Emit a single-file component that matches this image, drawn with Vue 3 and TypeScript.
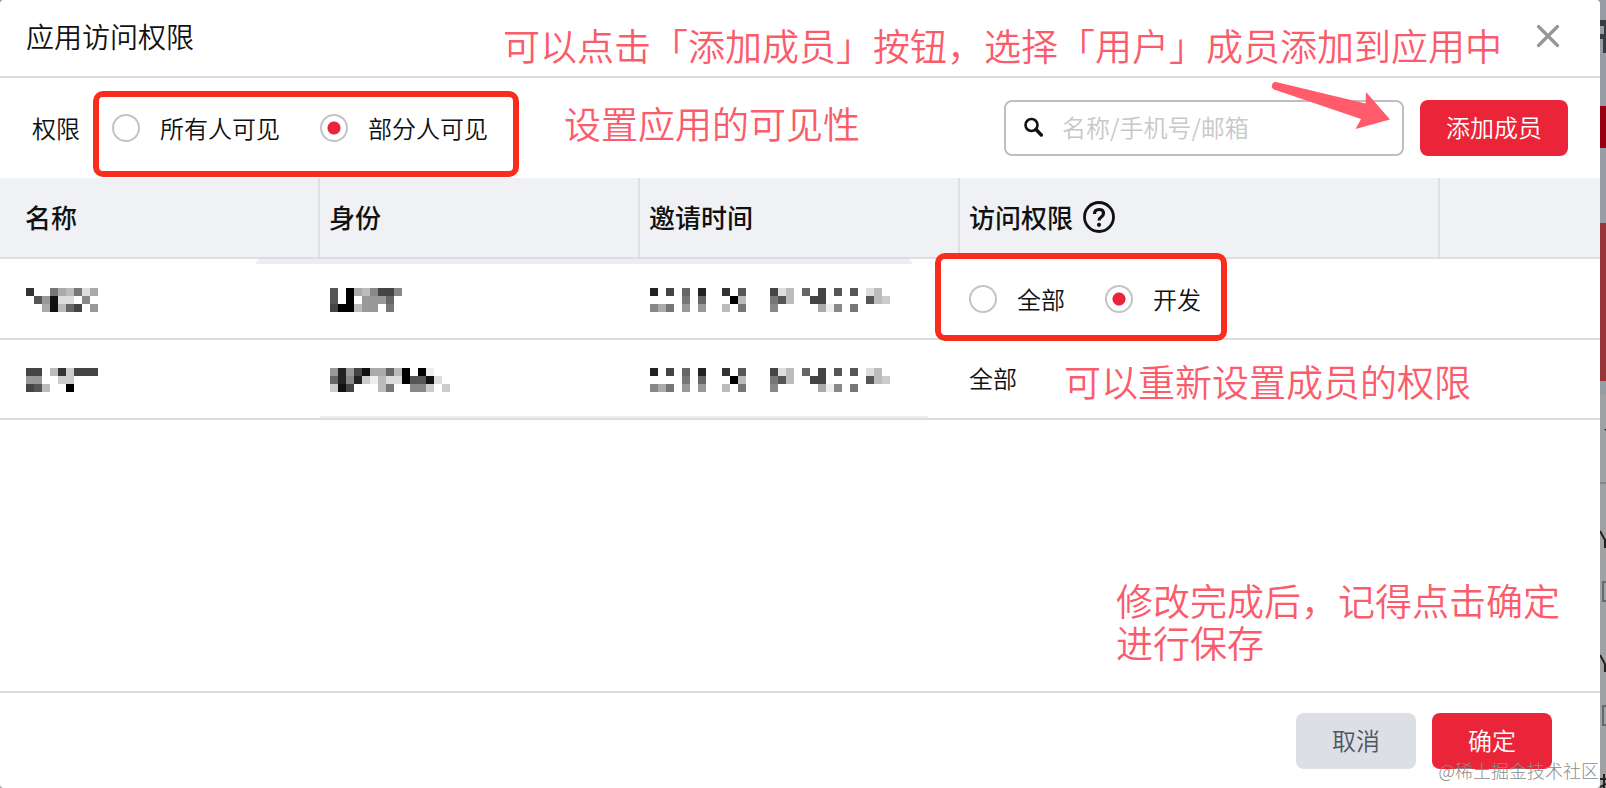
<script setup lang="ts">
import { ref } from 'vue'

interface Member {
  id: number
  name: string[]
  role: string[]
  invited: string[]
  editing: boolean
}

const visibility = ref<'all' | 'part'>('part')
const access = ref<'all' | 'dev'>('dev')
const keyword = ref('')

const invitedMask = [
  '2.4.6.2..3.5...4db.6.4.5.5.db.',
  '....7.6...0b...75b..44.....5bc',
  '8a7.9.9..b.7...8.....ae8.7....',
]

// Masked values: one hex grey level per 8px block, a dot leaves the block empty.
const members: Member[] = [
  {
    id: 1,
    name: ['3..7ab7da', '.591ddf8.', '..a1b64.9'],
    role: ['5.0ab8448', '5.0.9996.', '400b99.7.'],
    invited: invitedMask,
    editing: true,
  },
  {
    id: 2,
    name: ['44.b3c444', '99..cc...', '45b.f0...'],
    role: ['92941aa6b0.0e..', '6282cebdd0551d.', 'c14...b7..88cfc'],
    invited: invitedMask,
    editing: false,
  },
]

function blocks(mask: string[]) {
  return mask.flatMap((line, y) =>
    [...line].flatMap((c, x) => (c === '.' ? [] : [{ x: x * 8, y: y * 8, fill: `#${c}${c}${c}` }])),
  )
}
</script>

<template>
  <div class="page">
    <main class="dialog" role="dialog" aria-labelledby="dialog-title">
      <header class="head">
        <h1 id="dialog-title">应用访问权限</h1>
        <button class="close" type="button" aria-label="关闭">
          <svg width="24" height="24" viewBox="0 0 24 24">
            <path d="M2.500 2.500 21.500 21.500M21.500 2.500 2.500 21.500" fill="none" stroke="#969696" stroke-width="3.200" stroke-linecap="round" />
          </svg>
        </button>
        <p class="note note-add">可以点击「添加成员」按钮，选择「用户」成员添加到应用中</p>
      </header>

      <section class="toolbar">
        <span id="visibility-label">权限</span>
        <div class="radios framed" role="radiogroup" aria-labelledby="visibility-label">
          <label><input v-model="visibility" type="radio" name="visibility" value="all" />所有人可见</label>
          <label><input v-model="visibility" type="radio" name="visibility" value="part" />部分人可见</label>
        </div>
        <p class="note note-visible">设置应用的可见性</p>
        <div class="search">
          <svg width="20" height="20" viewBox="0 0 20 20">
            <circle cx="7.500" cy="8" r="6" fill="none" stroke="#111" stroke-width="2.600" />
            <path d="M12 12.500 17.300 18" fill="none" stroke="#111" stroke-width="3.400" stroke-linecap="round" />
          </svg>
          <input v-model="keyword" type="search" placeholder="名称/手机号/邮箱" aria-label="名称/手机号/邮箱" />
        </div>
        <button class="btn primary add" type="button">添加成员</button>
        <svg class="arrow" width="120" height="50" viewBox="0 0 120 50">
          <path d="M6 2 95.500 23.500 96 12 120 39.500 85.500 49 91 39 4 9.500Q0 7 3 3Q4 1.500 6 2Z" fill="#ff5b6b" />
        </svg>
      </section>

      <div class="list">
        <table>
          <colgroup>
            <col class="c20" /><col class="c20" /><col class="c20" /><col class="c30" /><col class="c10" />
          </colgroup>
          <thead>
            <tr>
              <th scope="col">名称</th>
              <th scope="col">身份</th>
              <th scope="col">邀请时间</th>
              <th scope="col">
                <span class="access-head">
                  访问权限
                  <svg width="32" height="32" viewBox="0 0 32 32">
                    <circle cx="16" cy="16" r="14.500" fill="none" stroke="#111" stroke-width="2.800" />
                    <path d="M11.500 13Q11.500 8.500 16 8.500Q20.500 8.500 20.500 12.300Q20.500 14.500 18.300 16Q16 17.500 16 19.500" fill="none" stroke="#111" stroke-width="3.200" />
                    <circle cx="16" cy="23.800" r="2.100" fill="#111" />
                  </svg>
                </span>
              </th>
              <th></th>
            </tr>
          </thead>
          <tbody>
            <tr v-for="m in members" :key="m.id">
              <td v-for="(mask, i) in [m.name, m.role, m.invited]" :key="i">
                <svg class="mask" :width="mask[0].length * 8" height="24" shape-rendering="crispEdges" aria-hidden="true">
                  <rect v-for="b in blocks(mask)" :key="`${b.x}-${b.y}`" :x="b.x" :y="b.y" width="8" height="8" :fill="b.fill" />
                </svg>
              </td>
              <td>
                <div v-if="m.editing" class="radios framed" role="radiogroup" aria-label="访问权限">
                  <label><input v-model="access" type="radio" name="access" value="all" />全部</label>
                  <label><input v-model="access" type="radio" name="access" value="dev" />开发</label>
                </div>
                <div v-else class="plain">
                  全部
                  <p class="note note-access">可以重新设置成员的权限</p>
                </div>
              </td>
              <td></td>
            </tr>
          </tbody>
        </table>
        <div class="band band-top"></div>
        <div class="band band-bottom"></div>
      </div>

      <section class="rest">
        <p class="note note-save">修改完成后，记得点击确定<br />进行保存</p>
      </section>

      <footer class="foot">
        <button class="btn cancel" type="button">取消</button>
        <button class="btn primary" type="button">确定</button>
        <span class="watermark">@稀土掘金技术社区</span>
      </footer>
    </main>

    <svg class="behind" width="6" height="788" viewBox="0 0 6 788" aria-hidden="true">
      <rect width="6" height="788" fill="#a0a1a3" />
      <rect width="6" height="395" fill="#969da5" />
      <path d="M0 20H6V53H3V39H0V34H4V26H0Z" fill="#363c42" />
      <rect y="106" width="6" height="42" fill="#980012" />
      <rect y="223" width="6" height="158" fill="#963439" />
      <rect y="482" width="6" height="2" fill="#858688" />
      <path d="M4 429H6V431Z" fill="#222" />
      <path d="M0 531 5 540V548M0 655 5 664V672" fill="none" stroke="#222" stroke-width="2" />
      <path d="M6 582H3V601H6M6 706H3V725H6" fill="none" stroke="#66696d" stroke-width="2" />
      <path d="M4 774V788M0 779H6M0 787 6 784" fill="none" stroke="#222" stroke-width="2" />
    </svg>
  </div>
</template>

<style>
body {
  margin: 0;
  background: #a0a1a3;
}
</style>

<style scoped>
.page {
  display: flex;
  min-height: 100vh;
  overflow: hidden;
  font-family: "Noto Sans CJK SC", sans-serif;
  font-size: 24px;
  font-weight: 350;
  line-height: 36px;
  color: #111;
}
.dialog {
  flex: 1;
  min-width: 0;
  display: flex;
  flex-direction: column;
  background: #fff;
  border-radius: 4px;
}
.behind {
  flex: none;
}
.head {
  position: relative;
  display: flex;
  align-items: center;
  justify-content: space-between;
  height: 78px;
  box-sizing: border-box;
  padding: 0 40px 5px 26px;
  border-bottom: 2px solid #d9dbdd;
}
h1 {
  margin: 0;
  font-size: 28px;
  font-weight: inherit;
}
.close {
  display: flex;
  padding: 0;
  border: 0;
  background: none;
}
.note {
  position: absolute;
  margin: 0;
  font-size: 37px;
  font-weight: 350;
  line-height: 42px;
  color: #fb5c6b;
  white-space: nowrap;
}
.note-add {
  right: 98px;
  top: 24px;
}
.toolbar {
  position: relative;
  display: flex;
  align-items: center;
  height: 100px;
  box-sizing: border-box;
  padding: 0 32px;
}
.radios {
  position: relative;
  display: inline-flex;
  gap: 40px;
}
.toolbar .radios {
  margin-left: 32px;
}
.radios label {
  display: flex;
  align-items: center;
  gap: 20px;
}
.radios input {
  appearance: none;
  box-sizing: border-box;
  width: 28px;
  height: 28px;
  margin: 0;
  border: 2px solid #c4c4c6;
  border-radius: 50%;
  background: #fff;
}
.radios input:checked {
  background: radial-gradient(circle, #e9243b 6px, #fff 7px);
}
.framed::after {
  content: "";
  position: absolute;
  inset: -19px -31px -31px -19px;
  border: 6px solid #fa2c1e;
  border-radius: 10px;
  pointer-events: none;
}
td .framed::after {
  inset: -28px -26px -24px -34px;
}
.note-visible {
  left: 564px;
  top: 24px;
}
.search {
  display: flex;
  align-items: center;
  gap: 18px;
  box-sizing: border-box;
  width: 400px;
  height: 56px;
  margin-left: auto;
  padding: 0 18px 2px;
  border: 2px solid #bebebe;
  border-radius: 8px;
}
.search svg {
  flex: none;
}
.search input {
  flex: 1;
  min-width: 0;
  padding: 0;
  border: 0;
  outline: 0;
  background: none;
  font: inherit;
  color: inherit;
}
.search input::placeholder {
  color: #c8c8c8;
  opacity: 1;
}
.btn {
  width: 120px;
  height: 56px;
  padding: 0 0 2px;
  border: 0;
  border-radius: 8px;
  font: inherit;
}
.primary {
  background: #eb2539;
  color: #fff;
}
.cancel {
  background: #dce0e6;
  color: #50555f;
}
.add {
  width: 148px;
  margin-left: 16px;
}
.arrow {
  position: absolute;
  right: 210px;
  top: 2px;
}
.list {
  position: relative;
}
table {
  width: 100%;
  table-layout: fixed;
  border-collapse: separate;
  border-spacing: 0;
}
.c20 {
  width: 20%;
}
.c30 {
  width: 30%;
}
.c10 {
  width: 10%;
}
th,
td {
  box-sizing: border-box;
  height: 80px;
  padding: 0 10px 2px;
  border-bottom: 2px solid #dcdee1;
  text-align: left;
}
th {
  height: 81px;
  padding-left: 9px;
  border-right: 2px solid #dcdfe3;
  background: #eff1f5;
  font-size: 26px;
  font-weight: 500;
}
tbody tr:first-child td {
  height: 81px;
}
th:last-child {
  border-right: 0;
}
th:first-child {
  padding-left: 25px;
}
td:first-child {
  padding-left: 26px;
}
td:nth-child(4) {
  padding-left: 9px;
}
.access-head {
  display: flex;
  align-items: center;
  gap: 10px;
}
.mask {
  display: block;
  margin-top: 4px;
}
td .radios {
  display: inline-flex;
  vertical-align: middle;
}
.plain {
  position: relative;
}
.note-access {
  left: 95px;
  top: 0;
}
.band {
  position: absolute;
  background: #eceef2;
}
.band-top {
  left: 16%;
  right: 43%;
  top: 81px;
  height: 5px;
  border-radius: 12px 12px 0 0;
}
.band-bottom {
  left: 20%;
  right: 42%;
  bottom: 2px;
  height: 2px;
}
.rest {
  position: relative;
  flex: 1;
}
.note-save {
  right: 40px;
  bottom: 28px;
}
.foot {
  position: relative;
  display: flex;
  justify-content: flex-end;
  gap: 16px;
  padding: 20px 48px 19px;
  border-top: 2px solid #d9dbdd;
}
.watermark {
  position: absolute;
  right: 1px;
  bottom: 6px;
  font-size: 18px;
  font-weight: 300;
  line-height: 24px;
  color: #8c8c8c;
}
</style>
